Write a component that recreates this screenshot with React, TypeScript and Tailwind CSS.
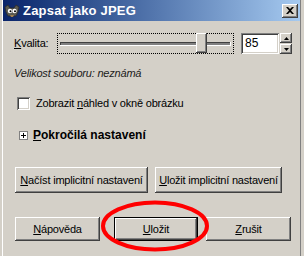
import React from "react";

const raised =
  "bg-[#d4d0c8] shadow-[inset_-1px_-1px_#404040,inset_1px_1px_#ffffff,inset_-2px_-2px_#808080,inset_2px_2px_#d4d0c8]";
const sunken =
  "shadow-[inset_1px_1px_#808080,inset_-1px_-1px_#ffffff,inset_2px_2px_#404040,inset_-2px_-2px_#d4d0c8]";

function Btn({ w, children, def }: { w: string; children: React.ReactNode; def?: boolean }) {
  if (def) {
    return (
      <div className={`${w} h-[24px] border border-black flex`}>
        <div className={`flex-1 ${raised} flex items-center justify-center`}>{children}</div>
      </div>
    );
  }
  return <div className={`${w} ${raised} flex items-center justify-center`}>{children}</div>;
}

function Wilber() {
  return (
    <svg width="16" height="16" viewBox="0 0 16 16">
      <path d="M1 4 L4 2 L6 5 L10 5 L12 2 L15 4 L14 9 L12 13 L4 13 L2 9 Z" fill="#5a5a52" stroke="#2a2a2a" strokeWidth="0.8" />
      <circle cx="6" cy="8" r="2.2" fill="#fff" />
      <circle cx="10.5" cy="8" r="2.2" fill="#fff" />
      <circle cx="6.5" cy="8.3" r="1" fill="#000" />
      <circle cx="11" cy="8.3" r="1" fill="#000" />
      <path d="M6 12 L10 12 L9 14 L7 14 Z" fill="#a08050" />
    </svg>
  );
}

export default function App() {
  return (
    <div className="w-[304px] h-[256px] bg-[#d4d0c8] relative overflow-hidden font-['Liberation_Sans',Arial,sans-serif] text-[11px] tracking-[-0.2px] text-black leading-[13px]">
      <div className="flex flex-col h-full ml-[2px] border-l border-white mr-[3px] border-r border-r-[#808080]">
        {/* title bar */}
        <div className="h-[21px] flex items-center bg-gradient-to-r from-[#0a246a] to-[#a6caf0] pl-[1px] pr-[2px]">
          <div className="w-[16px] h-[16px] mt-[1px]">
            <Wilber />
          </div>
          <span className="ml-[3px] text-white font-bold text-[13px] tracking-[0.2px] leading-[15px]">Zapsat jako JPEG</span>
          <div className="flex-1" />
          <div className={`w-[16px] h-[14px] ${raised} flex items-center justify-center`}>
            <svg width="8" height="7" viewBox="0 0 8 7">
              <path d="M0 0 L2 0 L4 2 L6 0 L8 0 L5 3.5 L8 7 L6 7 L4 5 L2 7 L0 7 L3 3.5 Z" fill="#000" />
            </svg>
          </div>
        </div>

        {/* content */}
        <div className="flex flex-col pl-[11px]">
          {/* quality row */}
          <div className="flex items-center mt-[12px] h-[21px]">
            <span className="w-[43px]"><span className="underline">K</span>valita:</span>
            <div className="w-[177px] h-[21px] border border-dotted border-black flex items-center px-[2px] relative">
              <div className="w-full h-[4px] bg-[#808080] border-b border-r border-white shadow-[inset_1px_1px_#404040]" />
              <div className={`absolute left-[138px] top-[-1px] w-[11px] h-[20px] ${raised}`} />
            </div>
            <div className={`ml-[7px] w-[38px] h-[21px] bg-white ${sunken} flex items-center pl-[4px] text-[12px] tracking-normal`}>85</div>
            <div className="ml-[1px] flex flex-col gap-[1px]">
              <div className={`w-[12px] h-[10px] ${raised} flex items-center justify-center`}>
                <svg width="5" height="3" viewBox="0 0 5 3"><path d="M2.5 0 L5 3 L0 3 Z" fill="#000" /></svg>
              </div>
              <div className={`w-[12px] h-[10px] ${raised} flex items-center justify-center`}>
                <svg width="5" height="3" viewBox="0 0 5 3"><path d="M0 0 L5 0 L2.5 3 Z" fill="#000" /></svg>
              </div>
            </div>
          </div>

          <div className="mt-[13px] italic text-[#202020]">Velikost souboru: neznámá</div>

          <div className="mt-[17px] flex items-center h-[13px] ml-[3px]">
            <div className={`w-[13px] h-[13px] bg-white ${sunken}`} />
            <span className="ml-[6px]">Zobrazit <span className="underline">n</span>áhled v okně obrázku</span>
          </div>

          <div className="mt-[19px] flex items-center h-[13px] ml-[5px]">
            <div className="w-[9px] h-[9px] border border-[#808080] bg-white flex items-center justify-center">
              <svg width="5" height="5" viewBox="0 0 5 5"><path d="M0 2h5v1H0zM2 0h1v5H2z" fill="#000" /></svg>
            </div>
            <span className="ml-[5px] font-bold text-[12px] tracking-normal"><span className="underline">P</span>okročilá nastavení</span>
          </div>

          <div className="mt-[25px] flex h-[26px] ml-[1px]">
            <Btn w="w-[133px]"><span><span className="underline">N</span>ačíst implicitní nastavení</span></Btn>
            <div className="w-[7px]" />
            <Btn w="w-[127px]"><span><span className="underline">U</span>ložit implicitní nastavení</span></Btn>
          </div>

          <div className="mt-[24px] flex h-[24px] ml-[1px]">
            <Btn w="w-[85px]"><span><span className="underline">N</span>ápověda</span></Btn>
            <div className="w-[14px]" />
            <Btn w="w-[84px]" def><span><span className="underline">U</span>ložit</span></Btn>
            <div className="w-[8px]" />
            <Btn w="w-[85px]"><span><span className="underline">Z</span>rušit</span></Btn>
          </div>
        </div>
      </div>

      <svg className="absolute left-0 top-0 pointer-events-none" width="304" height="256">
        <ellipse cx="155" cy="226" rx="52" ry="23.5" fill="none" stroke="#ff0000" strokeWidth="4" />
      </svg>
    </div>
  );
}
